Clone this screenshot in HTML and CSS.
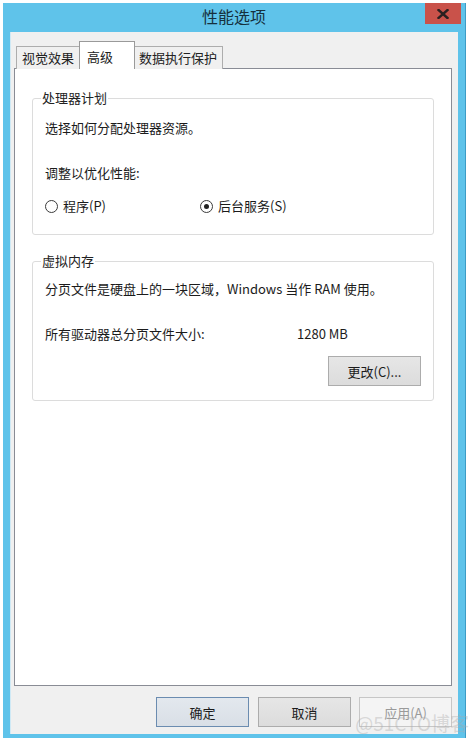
FILE: index.html
```html
<!DOCTYPE html>
<html>
<head>
  <meta charset="utf-8">
  <link rel="stylesheet" href="styles.css">
</head>
<body>
  <div class="window">
    <div class="titlebar">
      <div class="title">性能选项</div>
      <button class="close-btn" title="关闭">
        <svg width="12" height="10" viewBox="0 0 12 10"><path d="M1.5 1 L10.5 9 M10.5 1 L1.5 9" stroke="#2b2020" stroke-width="2.4" stroke-linecap="square"/></svg>
      </button>
    </div>

    <div class="client">
      <div class="tabs">
        <div class="tab">视觉效果</div>
        <div class="tab active">高级</div>
        <div class="tab">数据执行保护</div>
      </div>

      <div class="panel">
        <fieldset class="group group-cpu">
          <legend>处理器计划</legend>
          <div class="line first">选择如何分配处理器资源。</div>
          <div class="line gap">调整以优化性能:</div>
          <div class="radios">
            <label class="radio"><span class="dot"></span>程序(P)</label>
            <label class="radio checked"><span class="dot"></span>后台服务(S)</label>
          </div>
        </fieldset>

        <fieldset class="group group-mem">
          <legend>虚拟内存</legend>
          <div class="line first">分页文件是硬盘上的一块区域，Windows 当作 RAM 使用。</div>
          <div class="line gap size-row">
            <span class="size-label">所有驱动器总分页文件大小:</span>
            <span class="size-value">1280 MB</span>
          </div>
          <div class="change-row">
            <button class="btn">更改(C)...</button>
          </div>
        </fieldset>
      </div>

      <div class="footer">
        <button class="btn btn-default">确定</button>
        <button class="btn">取消</button>
        <button class="btn btn-disabled">应用(A)</button>
      </div>
    </div>

    <div class="watermark">@51CTO博客</div>
  </div>
</body>
</html>
```

FILE: styles.css
```css
body {
  margin: 0;
  padding: 3px 0 0 3px;
  background: #ffffff;
  font-family: "Noto Sans CJK SC", "Liberation Sans", sans-serif;
  font-size: 13px;
  color: #1b1b1b;
}

.window {
  position: relative;
  width: 462px;
  height: 735px;
  background: #5fc3ea;
  border-right: 1px solid #3d9cc6;
  display: flex;
  flex-direction: column;
}

.titlebar {
  height: 29px;
  display: flex;
  justify-content: center;
  position: relative;
}

.title {
  font-size: 16px;
  line-height: 26px;
  color: #16303d;
}

.close-btn {
  position: absolute;
  top: 0;
  right: 4px;
  width: 36px;
  height: 21px;
  padding: 0;
  border: none;
  background: #c9524a;
  display: flex;
  align-items: center;
  justify-content: center;
}

.client {
  flex: 1;
  margin: 0 7px 4px 7px;
  background: #f0f0f0;
  border-left: 1px solid #cfe9f5;
  padding: 10px 6px 0 3px;
  display: flex;
  flex-direction: column;
}

.tabs {
  display: flex;
  align-items: flex-end;
  padding-left: 2px;
  height: 27px;
  margin-bottom: -1px;
  position: relative;
  z-index: 1;
}

.tab {
  height: 22px;
  line-height: 22px;
  padding: 0 5px;
  background: #f0f0f0;
  border: 1px solid #adadad;
  border-bottom: none;
  margin-left: -1px;
  white-space: nowrap;
  color: #222;
}

.tab:first-child {
  margin-left: 0;
}

.tab.active {
  height: 27px;
  line-height: 29px;
  width: 42px;
  background: #ffffff;
  border-color: #9a9a9a;
  padding: 0 5px 0 7px;
  margin-left: -1px;
  margin-right: -1px;
  position: relative;
  z-index: 2;
}

.panel {
  box-sizing: border-box;
  height: 618px;
  background: #ffffff;
  border: 1px solid #898c95;
  padding: 20px 17px 0 17px;
  display: flex;
  flex-direction: column;
}

.group {
  margin: 0;
  padding: 0 12px;
  border: 1px solid #dcdcdc;
  border-radius: 3px;
  min-width: 0;
}

.group legend {
  padding: 0 1px;
  margin-left: -4px;
  line-height: 18px;
  color: #222;
}

.group-mem {
  margin-top: 17px;
}

.line {
  line-height: 20px;
}

.line.first {
  margin-top: 11px;
}

.group-mem .line.first {
  margin-top: 9px;
}

.line.gap {
  margin-top: 25px;
}

.radios {
  display: flex;
  margin-top: 13px;
  margin-bottom: 18px;
  line-height: 20px;
}

.radio {
  display: flex;
  align-items: center;
  gap: 5px;
  width: 155px;
}

.dot {
  width: 11px;
  height: 11px;
  border: 1px solid #3b3b3b;
  border-radius: 50%;
  background: #ffffff;
  display: flex;
  align-items: center;
  justify-content: center;
}

.radio.checked .dot::after {
  content: "";
  width: 5px;
  height: 5px;
  border-radius: 50%;
  background: #222;
}

.size-row {
  display: flex;
}

.size-label {
  width: 252px;
}

.change-row {
  display: flex;
  justify-content: flex-end;
  margin-top: 12px;
  margin-bottom: 14px;
}

.btn {
  width: 93px;
  height: 30px;
  padding: 0;
  font-family: inherit;
  font-size: 13px;
  color: #1b1b1b;
  background: linear-gradient(#e6e6e6, #dcdcdc);
  border: 1px solid #acacac;
}

.btn-default {
  border-color: #6b8cb0;
  background: linear-gradient(#e3e8ee, #d9dfe6);
}

.btn-disabled {
  color: #9a9a9a;
  background: #f4f4f4;
  border-color: #c6c6c6;
}

.footer {
  display: flex;
  justify-content: flex-end;
  gap: 9px;
  margin-top: 11px;
}

.footer .btn:nth-child(2) {
  margin-right: -1px;
}

.watermark {
  position: absolute;
  right: -4px;
  bottom: 2px;
  font-size: 19px;
  color: rgba(170, 170, 170, 0.4);
  pointer-events: none;
}
```
